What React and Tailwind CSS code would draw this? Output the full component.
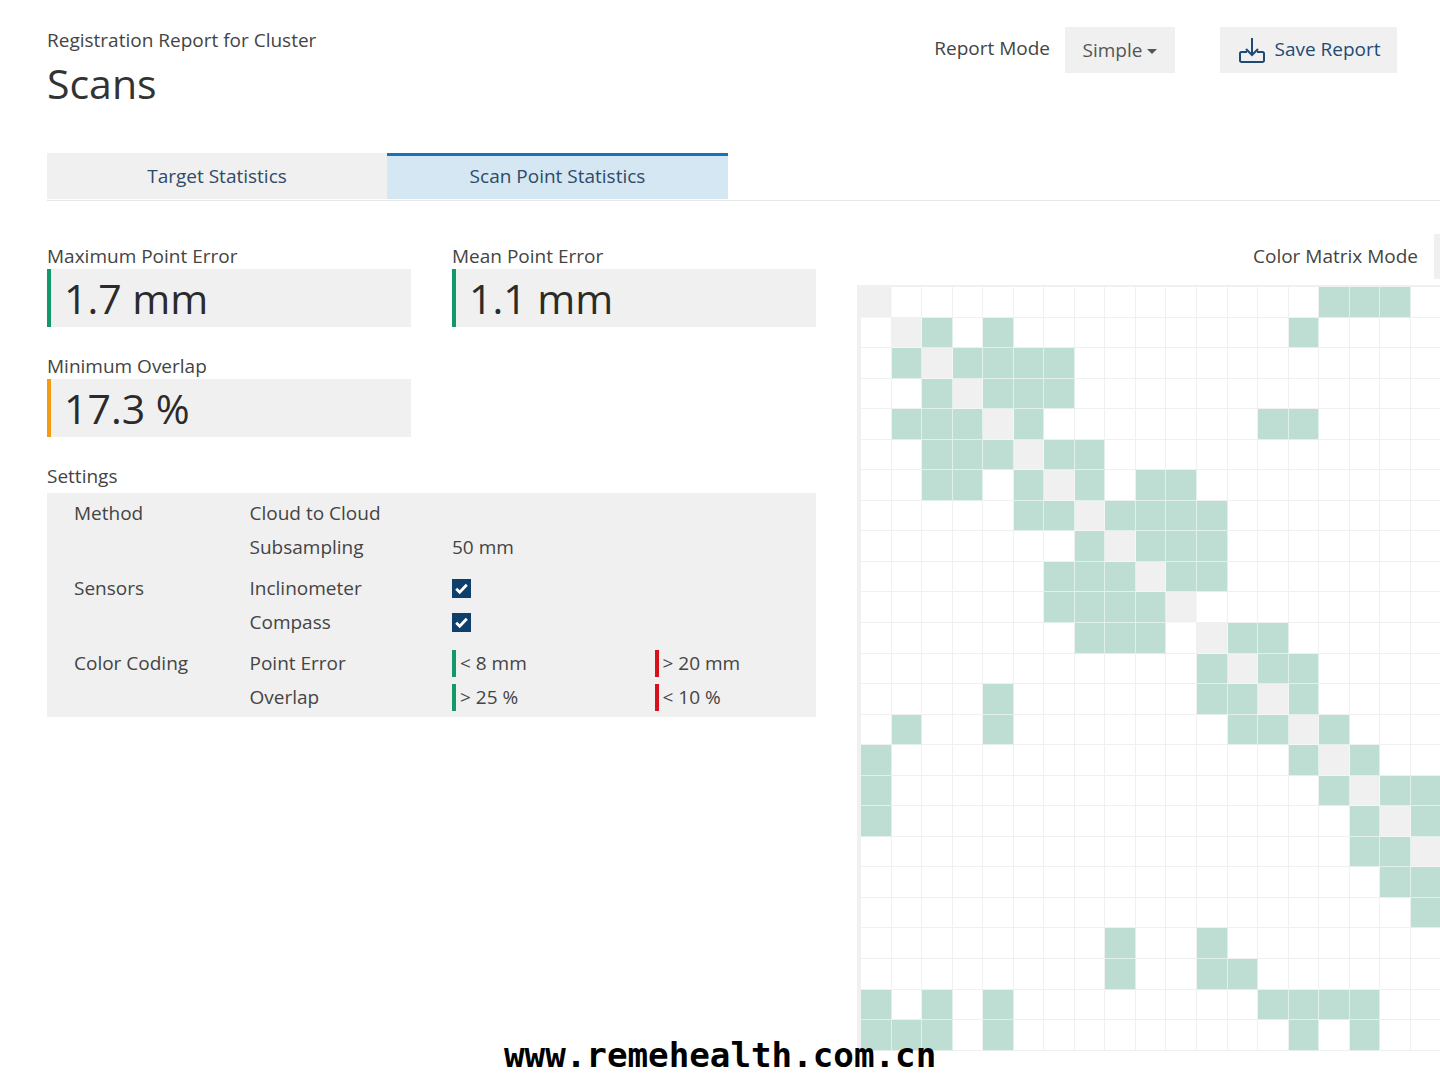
import React from 'react';

const matrixRows = [
    [15, 16, 17],
    [2, 4, 14],
    [1, 3, 4, 5, 6],
    [2, 4, 5, 6],
    [1, 2, 3, 5, 13, 14],
    [2, 3, 4, 6, 7],
    [2, 3, 5, 7, 9, 10],
    [5, 6, 8, 9, 10, 11],
    [7, 9, 10, 11],
    [6, 7, 8, 10, 11],
    [6, 7, 8, 9],
    [7, 8, 9, 12, 13],
    [11, 13, 14],
    [4, 11, 12, 14],
    [1, 4, 12, 13, 15],
    [0, 14, 16],
    [0, 15, 17, 18],
    [0, 16, 18],
    [16, 17],
    [17, 18],
    [18],
    [8, 11],
    [8, 11, 12],
    [0, 2, 4, 13, 14, 15, 16],
    [0, 1, 2, 4, 14, 16],
];

const columns = Array.from({ length: 20 }, (_, i) => i);

const StatCard = ({ label, value, accent }) => (
    <div>
        <div className="h-[23px] leading-[20px] text-[#444]">{label}</div>
        <div className={`flex h-[58px] w-[364px] items-center border-l-4 bg-[#f0f0f0] pl-[13px] text-[41px] leading-none text-[#2b2b2b] ${accent}`}>
            {value}
        </div>
    </div>
);

const CheckBox = () => (
    <span className="flex h-[19px] w-[19px] items-center justify-center bg-[#0f3f6b]">
        <svg width="15" height="15" viewBox="0 0 15 15" fill="none">
            <path d="M2.200 7.800l3.500 3.500L12.800 3.800" stroke="#fff" strokeWidth="2.800" />
        </svg>
    </span>
);

const Threshold = ({ color, children }) => (
    <div className="flex h-full items-center">
        <span className={`h-[27px] w-[4px] ${color}`} />
        <span className="ml-[4px]">{children}</span>
    </div>
);

const SettingsRow = ({ group, name, first, second, spaced }) => (
    <div className={`grid h-[34px] grid-cols-[175.5px_202.5px_202.5px_1fr] items-center pl-[27px] ${spaced ? 'mt-[7px]' : ''}`}>
        <div>{group}</div>
        <div>{name}</div>
        <div className="flex h-full items-center">{first}</div>
        <div className="flex h-full items-center">{second}</div>
    </div>
);

const MatrixCell = ({ row, col, green }) => {
    let style = 'border-[#f0f0f0] bg-white';
    if (row === col) style = 'border-[#f6f6f6] bg-[#f0f0f0]';
    if (green.includes(col)) style = 'border-[#e2f0eb] bg-[#bfded3]';
    return <div className={`border-r border-b ${style}`} />;
};

const App = () => {
    return (
        <div className="relative h-[1080px] w-[1440px] overflow-hidden bg-white font-['Open_Sans',sans-serif] text-[19px] text-[#444]">
            <div className="flex items-start justify-between pl-[47px] pr-[43px] pt-[26px]">
                <div>
                    <div className="leading-[28px] text-[#444]">Registration Report for Cluster</div>
                    <h1 className="mt-[2px] text-[41px] leading-[54px] text-[#333]">Scans</h1>
                </div>
                <div className="mt-[1px] flex items-center">
                    <span className="mt-[-4px] text-[#444]">Report Mode</span>
                    <button className="ml-[15px] flex h-[46px] w-[110px] items-center justify-center bg-[#f0f0f0] text-[#555]">
                        Simple
                        <span className="ml-[5px] mt-[2px] h-0 w-0 border-x-[5px] border-t-[5px] border-x-transparent border-t-[#555]" />
                    </button>
                    <button className="ml-[45px] flex h-[46px] w-[177px] items-center justify-center bg-[#f0f0f0] pb-[2px] pl-[3px] text-[#1f4a75]">
                        <svg width="26" height="27" viewBox="0 0 26 27" fill="none" stroke="#1f4a75" strokeWidth="2" className="mr-[9px] mt-[3px]">
                            <path d="M13 1v17" />
                            <path d="M7 12l6 6 6-6" />
                            <path d="M8 15H2.500a1.500 1.500 0 0 0-1.500 1.500v7A1.500 1.500 0 0 0 2.500 25h21a1.500 1.500 0 0 0 1.500-1.500v-7a1.500 1.500 0 0 0-1.500-1.500H18" />
                        </svg>
                        Save Report
                    </button>
                </div>
            </div>

            <div className="mt-[43px] ml-[47px] flex h-[48px] border-b border-[#e8e8e8]">
                <button className="h-[46px] w-[340px] bg-[#f0f0f0] pt-[1px] text-[#2f4a68]">Target Statistics</button>
                <button className="h-[46px] w-[341px] border-t-[3px] border-[#1874b3] bg-[#d5e7f2] pb-[2px] text-[#2f4a68]">Scan Point Statistics</button>
            </div>

            <div className="mt-[45px] flex pl-[47px]">
                <div className="w-[769px] shrink-0">
                    <div className="flex gap-[41px]">
                        <StatCard label="Maximum Point Error" value="1.7 mm" accent="border-[#12996a]" />
                        <StatCard label="Mean Point Error" value="1.1 mm" accent="border-[#12996a]" />
                    </div>
                    <div className="mt-[29px]">
                        <StatCard label="Minimum Overlap" value="17.3 %" accent="border-[#f39c12]" />
                    </div>
                    <div className="mt-[26px] h-[27px] leading-[27px]">Settings</div>
                    <div className="mt-[3px] h-[224px] bg-[#f0f0f0] pt-[3px]">
                        <SettingsRow group="Method" name="Cloud to Cloud" />
                        <SettingsRow name="Subsampling" first="50 mm" />
                        <SettingsRow spaced group="Sensors" name="Inclinometer" first={<CheckBox />} />
                        <SettingsRow name="Compass" first={<CheckBox />} />
                        <SettingsRow
                            spaced
                            group="Color Coding"
                            name="Point Error"
                            first={<Threshold color="bg-[#12996a]">&lt; 8 mm</Threshold>}
                            second={<Threshold color="bg-[#d8101c]">&gt; 20 mm</Threshold>}
                        />
                        <SettingsRow
                            name="Overlap"
                            first={<Threshold color="bg-[#12996a]">&gt; 25 %</Threshold>}
                            second={<Threshold color="bg-[#d8101c]">&lt; 10 %</Threshold>}
                        />
                    </div>
                </div>

                <div className="ml-[41px] mt-[-12px] min-w-0 flex-1 overflow-hidden">
                    <div className="flex h-[45px] items-center justify-end">
                        <span className="mr-[16px] whitespace-nowrap">Color Matrix Mode</span>
                        <div className="h-[45px] w-[6px] bg-[#f0f0f0]" />
                    </div>
                    <div className="mt-[6px] w-[620px] border-l-4 border-t-2 border-[#f0f0f0]">
                        <div className="grid grid-cols-[repeat(20,30.55px)] auto-rows-[30.55px]">
                            {matrixRows.map((green, row) =>
                                columns.map((col) => <MatrixCell key={`${row}-${col}`} row={row} col={col} green={green} />)
                            )}
                        </div>
                    </div>
                </div>
            </div>

            <div className="absolute left-[504px] top-[1035px] font-['DejaVu_Sans_Mono',monospace] text-[34.2px] font-bold leading-[40px] text-black">
                www.remehealth.com.cn
            </div>
        </div>
    );
};

export default App;
